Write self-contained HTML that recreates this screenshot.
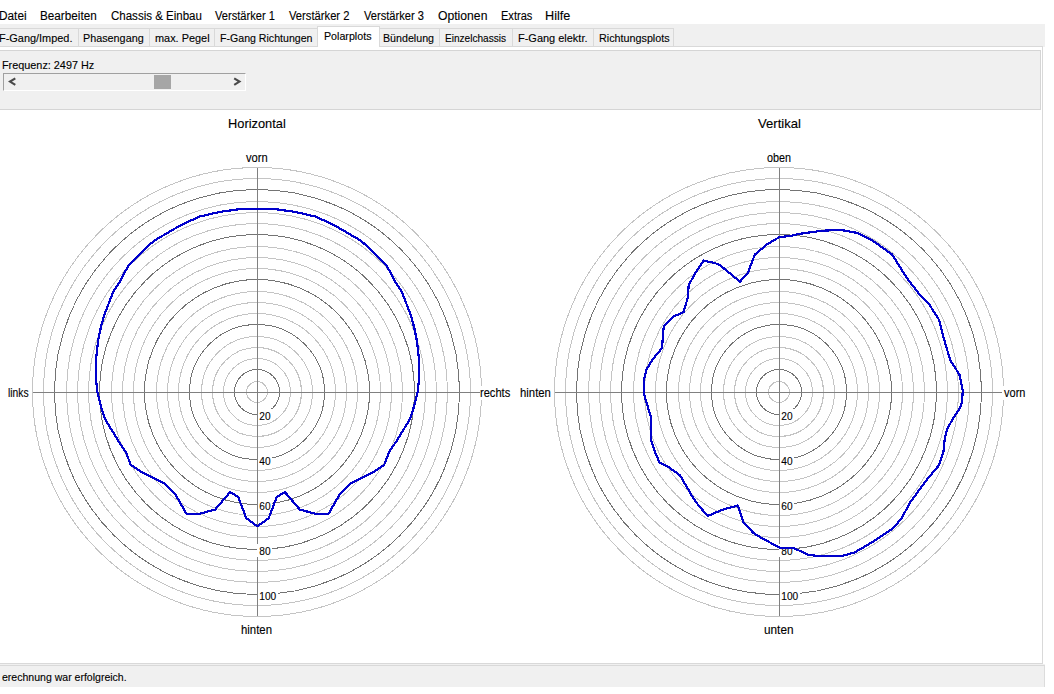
<!DOCTYPE html>
<html><head><meta charset="utf-8">
<style>
html,body{margin:0;padding:0;width:1054px;height:694px;overflow:hidden;background:#fff;}
body{position:relative;font-family:"Liberation Sans",sans-serif;}
.t{position:absolute;white-space:pre;transform-origin:0 0;color:#000;-webkit-text-stroke:0.12px #000;}
.abs{position:absolute;}
#win{position:absolute;left:0;top:24px;width:1045px;height:663px;background:#f0f0f0;}
.tab{position:absolute;top:28px;height:18px;border:1px solid #d9d9d9;border-bottom:none;background:#f0f0f0;box-sizing:content-box;}
.tabsel{position:absolute;left:317px;top:26px;width:61px;height:20px;border:1px solid #d9d9d9;border-bottom:none;background:#fff;}
#page{position:absolute;left:-1px;top:46px;width:1042px;height:616px;border:1px solid #d9d9d9;background:#fff;}
#panel{position:absolute;left:-1px;top:50px;width:1040px;height:58px;border:1px solid #d5d5d5;background:#f0f0f0;}
#sb{position:absolute;left:3px;top:73px;width:241px;height:16px;border-top:1px solid #a0a0a0;border-left:1px solid #a0a0a0;border-right:1px solid #fff;border-bottom:1px solid #fff;background:#f0f0f0;}
#thumb{position:absolute;left:154px;top:75px;width:17px;height:14px;background:#a6a6a6;}
#status{position:absolute;left:0;top:665px;width:1044px;height:21px;border-top:1px solid #d9d9d9;border-right:1px solid #dcdcdc;background:#f0f0f0;}
svg.plot{position:absolute;left:0;top:0;}
svg text{font-family:"Liberation Sans",sans-serif;fill:#000;stroke:#000;stroke-width:0.12px;}
</style></head><body>
<div id="win"></div>
<div class="tab" style="left:-7px;width:84px"></div><div class="tab" style="left:78px;width:70px"></div><div class="tab" style="left:149px;width:64px"></div><div class="tab" style="left:214px;width:103px"></div><div class="tab" style="left:379px;width:59px"></div><div class="tab" style="left:439px;width:72px"></div><div class="tab" style="left:512px;width:80px"></div><div class="tab" style="left:593px;width:79px"></div>
<div id="page"></div><div class="tabsel"></div><div class="abs" style="left:1043px;top:47px;width:11px;height:617px;background:#fff"></div>
<div id="panel"></div>
<div id="sb"></div>
<div id="thumb"></div>
<svg class="plot" width="1054" height="694" style="z-index:1">
<polyline points="15.3,78.3 10,81.6 15.3,84.9" fill="none" stroke="#4a4a4a" stroke-width="2.1"/>
<polyline points="234.2,78.3 239.5,81.6 234.2,84.9" fill="none" stroke="#4a4a4a" stroke-width="2.1"/>
</svg>
<div id="status"></div>
<svg class="plot" width="1054" height="694" viewBox="0 0 1054 694">
<circle cx="257" cy="392" r="10.50" fill="none" stroke="#c4c4c4" stroke-width="1" shape-rendering="crispEdges"/>
<circle cx="257" cy="392" r="22.50" fill="none" stroke="#747474" stroke-width="1" shape-rendering="crispEdges"/>
<circle cx="257" cy="392" r="33.50" fill="none" stroke="#c4c4c4" stroke-width="1" shape-rendering="crispEdges"/>
<circle cx="257" cy="392" r="44.50" fill="none" stroke="#c4c4c4" stroke-width="1" shape-rendering="crispEdges"/>
<circle cx="257" cy="392" r="55.50" fill="none" stroke="#c4c4c4" stroke-width="1" shape-rendering="crispEdges"/>
<circle cx="257" cy="392" r="67.50" fill="none" stroke="#747474" stroke-width="1" shape-rendering="crispEdges"/>
<circle cx="257" cy="392" r="78.50" fill="none" stroke="#c4c4c4" stroke-width="1" shape-rendering="crispEdges"/>
<circle cx="257" cy="392" r="89.50" fill="none" stroke="#c4c4c4" stroke-width="1" shape-rendering="crispEdges"/>
<circle cx="257" cy="392" r="100.50" fill="none" stroke="#c4c4c4" stroke-width="1" shape-rendering="crispEdges"/>
<circle cx="257" cy="392" r="112.50" fill="none" stroke="#747474" stroke-width="1" shape-rendering="crispEdges"/>
<circle cx="257" cy="392" r="123.50" fill="none" stroke="#c4c4c4" stroke-width="1" shape-rendering="crispEdges"/>
<circle cx="257" cy="392" r="134.50" fill="none" stroke="#c4c4c4" stroke-width="1" shape-rendering="crispEdges"/>
<circle cx="257" cy="392" r="145.50" fill="none" stroke="#c4c4c4" stroke-width="1" shape-rendering="crispEdges"/>
<circle cx="257" cy="392" r="157.50" fill="none" stroke="#747474" stroke-width="1" shape-rendering="crispEdges"/>
<circle cx="257" cy="392" r="168.50" fill="none" stroke="#c4c4c4" stroke-width="1" shape-rendering="crispEdges"/>
<circle cx="257" cy="392" r="179.50" fill="none" stroke="#c4c4c4" stroke-width="1" shape-rendering="crispEdges"/>
<circle cx="257" cy="392" r="190.50" fill="none" stroke="#c4c4c4" stroke-width="1" shape-rendering="crispEdges"/>
<circle cx="257" cy="392" r="202.50" fill="none" stroke="#747474" stroke-width="1" shape-rendering="crispEdges"/>
<circle cx="257" cy="392" r="213.50" fill="none" stroke="#c4c4c4" stroke-width="1" shape-rendering="crispEdges"/>
<circle cx="257" cy="392" r="224.50" fill="none" stroke="#c4c4c4" stroke-width="1" shape-rendering="crispEdges"/>
<line x1="33" y1="392.5" x2="481" y2="392.5" stroke="#808080" stroke-width="1"/>
<line x1="257.5" y1="168" x2="257.5" y2="616" stroke="#808080" stroke-width="1"/>
<circle cx="779" cy="392" r="10.50" fill="none" stroke="#c4c4c4" stroke-width="1" shape-rendering="crispEdges"/>
<circle cx="779" cy="392" r="22.50" fill="none" stroke="#747474" stroke-width="1" shape-rendering="crispEdges"/>
<circle cx="779" cy="392" r="33.50" fill="none" stroke="#c4c4c4" stroke-width="1" shape-rendering="crispEdges"/>
<circle cx="779" cy="392" r="44.50" fill="none" stroke="#c4c4c4" stroke-width="1" shape-rendering="crispEdges"/>
<circle cx="779" cy="392" r="55.50" fill="none" stroke="#c4c4c4" stroke-width="1" shape-rendering="crispEdges"/>
<circle cx="779" cy="392" r="67.50" fill="none" stroke="#747474" stroke-width="1" shape-rendering="crispEdges"/>
<circle cx="779" cy="392" r="78.50" fill="none" stroke="#c4c4c4" stroke-width="1" shape-rendering="crispEdges"/>
<circle cx="779" cy="392" r="89.50" fill="none" stroke="#c4c4c4" stroke-width="1" shape-rendering="crispEdges"/>
<circle cx="779" cy="392" r="100.50" fill="none" stroke="#c4c4c4" stroke-width="1" shape-rendering="crispEdges"/>
<circle cx="779" cy="392" r="112.50" fill="none" stroke="#747474" stroke-width="1" shape-rendering="crispEdges"/>
<circle cx="779" cy="392" r="123.50" fill="none" stroke="#c4c4c4" stroke-width="1" shape-rendering="crispEdges"/>
<circle cx="779" cy="392" r="134.50" fill="none" stroke="#c4c4c4" stroke-width="1" shape-rendering="crispEdges"/>
<circle cx="779" cy="392" r="145.50" fill="none" stroke="#c4c4c4" stroke-width="1" shape-rendering="crispEdges"/>
<circle cx="779" cy="392" r="157.50" fill="none" stroke="#747474" stroke-width="1" shape-rendering="crispEdges"/>
<circle cx="779" cy="392" r="168.50" fill="none" stroke="#c4c4c4" stroke-width="1" shape-rendering="crispEdges"/>
<circle cx="779" cy="392" r="179.50" fill="none" stroke="#c4c4c4" stroke-width="1" shape-rendering="crispEdges"/>
<circle cx="779" cy="392" r="190.50" fill="none" stroke="#c4c4c4" stroke-width="1" shape-rendering="crispEdges"/>
<circle cx="779" cy="392" r="202.50" fill="none" stroke="#747474" stroke-width="1" shape-rendering="crispEdges"/>
<circle cx="779" cy="392" r="213.50" fill="none" stroke="#c4c4c4" stroke-width="1" shape-rendering="crispEdges"/>
<circle cx="779" cy="392" r="224.50" fill="none" stroke="#c4c4c4" stroke-width="1" shape-rendering="crispEdges"/>
<line x1="555" y1="392.5" x2="1003" y2="392.5" stroke="#808080" stroke-width="1"/>
<line x1="779.5" y1="168" x2="779.5" y2="616" stroke="#808080" stroke-width="1"/>
<rect x="258" y="409" width="14" height="13" fill="#fff"/>
<text x="259.3" y="420" font-size="11" textLength="11.25" lengthAdjust="spacingAndGlyphs">20</text>
<rect x="258" y="454" width="14" height="13" fill="#fff"/>
<text x="259.3" y="465" font-size="11" textLength="11.25" lengthAdjust="spacingAndGlyphs">40</text>
<rect x="258" y="499" width="14" height="13" fill="#fff"/>
<text x="259.3" y="510" font-size="11" textLength="11.25" lengthAdjust="spacingAndGlyphs">60</text>
<rect x="257" y="544" width="15" height="13" fill="#fff"/>
<text x="259.3" y="555" font-size="11" textLength="11.25" lengthAdjust="spacingAndGlyphs">80</text>
<rect x="258" y="589" width="20" height="13" fill="#fff"/>
<text x="259.3" y="600" font-size="11" textLength="16.9" lengthAdjust="spacingAndGlyphs">100</text>
<rect x="480" y="386" width="36" height="14" fill="#fff"/>
<rect x="780" y="409" width="14" height="13" fill="#fff"/>
<text x="781.3" y="420" font-size="11" textLength="11.25" lengthAdjust="spacingAndGlyphs">20</text>
<rect x="780" y="454" width="14" height="13" fill="#fff"/>
<text x="781.3" y="465" font-size="11" textLength="11.25" lengthAdjust="spacingAndGlyphs">40</text>
<rect x="780" y="499" width="14" height="13" fill="#fff"/>
<text x="781.3" y="510" font-size="11" textLength="11.25" lengthAdjust="spacingAndGlyphs">60</text>
<rect x="779" y="544" width="15" height="13" fill="#fff"/>
<text x="781.3" y="555" font-size="11" textLength="11.25" lengthAdjust="spacingAndGlyphs">80</text>
<rect x="780" y="589" width="20" height="13" fill="#fff"/>
<text x="781.3" y="600" font-size="11" textLength="16.9" lengthAdjust="spacingAndGlyphs">100</text>
<rect x="1002" y="386" width="36" height="14" fill="#fff"/>
<polyline fill="none" stroke="#0000cc" stroke-width="2.2" stroke-linejoin="round" shape-rendering="crispEdges" points="257.3,209.0 241.0,209.0 219.7,211.9 199.4,216.6 180.7,225.2 154.8,240.3 146.1,247.6 128.8,264.8 118.7,283.6 113.2,291.9 104.0,315.6 100.7,328.0 98.1,340.9 96.2,357.8 95.8,378.5 97.5,392.7 101.5,408.1 105.0,419.0 117.6,439.7 125.7,451.8 130.9,465.1 140.7,471.4 150.0,476.1 165.0,483.6 174.8,493.4 186.3,513.6 200.2,513.6 215.1,509.6 230.1,492.1 238.2,496.9 246.3,518.2 257.3,526.3 268.7,518.2 276.8,496.9 284.9,492.1 299.9,509.6 314.8,513.6 328.7,513.6 340.2,493.4 350.0,483.6 365.0,476.1 374.3,471.4 384.1,465.1 389.3,451.8 397.4,439.7 410.0,419.0 413.5,408.1 417.5,392.7 419.2,378.5 418.8,357.8 416.9,340.9 414.3,328.0 411.0,315.6 401.8,291.9 396.3,283.6 386.2,264.8 368.9,247.6 360.2,240.3 334.3,225.2 315.6,216.6 295.3,211.9 274.0,209.0 257.7,209.0 257.3,209.0"/>
<polyline fill="none" stroke="#0000cc" stroke-width="2.2" stroke-linejoin="round" shape-rendering="crispEdges" points="779.4,237.1 789.5,236.1 799.9,233.8 821.6,230.8 840.3,229.8 857.6,233.0 872.0,240.2 892.2,254.6 906.6,277.6 918.1,292.7 929.6,305.0 939.2,320.1 944.3,340.2 950.3,360.4 959.4,374.5 962.8,390.6 962.0,402.7 959.4,408.7 952.3,419.8 947.3,428.9 944.7,439.0 943.4,452.1 939.1,465.1 926.1,480.6 909.7,503.1 901.9,517.8 893.2,528.2 872.5,542.0 854.7,552.4 842.8,555.8 816.0,555.8 808.1,554.7 794.4,548.4 780.2,547.8 764.8,539.8 753.4,533.0 743.5,522.1 738.0,505.5 724.5,509.0 707.9,515.8 699.1,506.3 692.0,496.0 680.1,475.4 669.0,467.4 659.5,462.4 654.2,450.0 650.7,438.4 650.7,415.9 646.1,401.5 643.8,392.3 643.8,380.2 646.4,369.8 652.5,359.5 662.0,348.2 663.7,326.7 674.1,316.3 683.6,312.0 687.9,297.3 688.7,285.2 695.6,272.5 703.6,260.6 715.2,263.2 719.8,265.0 739.9,281.7 748.0,272.5 752.6,260.3 754.9,254.6 763.0,247.7 767.6,244.0 779.4,237.1"/>
</svg>
<div class="t" style="left:-0.98px;top:10px;font-size:12px;line-height:12px;transform:scaleX(0.9846);">Datei</div>
<div class="t" style="left:39.62px;top:10px;font-size:12px;line-height:12px;transform:scaleX(0.9768);">Bearbeiten</div>
<div class="t" style="left:110.50px;top:10px;font-size:12px;line-height:12px;transform:scaleX(0.9596);">Chassis &amp; Einbau</div>
<div class="t" style="left:215.20px;top:10px;font-size:12px;line-height:12px;transform:scaleX(0.9250);">Verstärker 1</div>
<div class="t" style="left:289.20px;top:10px;font-size:12px;line-height:12px;transform:scaleX(0.9344);">Verstärker 2</div>
<div class="t" style="left:363.60px;top:10px;font-size:12px;line-height:12px;transform:scaleX(0.9250);">Verstärker 3</div>
<div class="t" style="left:437.60px;top:10px;font-size:12px;line-height:12px;transform:scaleX(1.0146);">Optionen</div>
<div class="t" style="left:500.58px;top:10px;font-size:12px;line-height:12px;transform:scaleX(0.9212);">Extras</div>
<div class="t" style="left:545.44px;top:10px;font-size:12px;line-height:12px;transform:scaleX(1.0565);">Hilfe</div>
<div class="t" style="left:-1.29px;top:33px;font-size:11px;line-height:11px;transform:scaleX(0.9931);">F-Gang/Imped.</div>
<div class="t" style="left:83.42px;top:33px;font-size:11px;line-height:11px;transform:scaleX(0.9817);">Phasengang</div>
<div class="t" style="left:154.61px;top:33px;font-size:11px;line-height:11px;transform:scaleX(0.9925);">max. Pegel</div>
<div class="t" style="left:219.64px;top:33px;font-size:11px;line-height:11px;transform:scaleX(0.9632);">F-Gang Richtungen</div>
<div class="t" style="left:323.83px;top:31px;font-size:11px;line-height:11px;transform:scaleX(0.9708);">Polarplots</div>
<div class="t" style="left:382.73px;top:33px;font-size:11px;line-height:11px;transform:scaleX(0.9706);">Bündelung</div>
<div class="t" style="left:444.68px;top:33px;font-size:11px;line-height:11px;transform:scaleX(0.9167);">Einzelchassis</div>
<div class="t" style="left:517.50px;top:33px;font-size:11px;line-height:11px;transform:scaleX(0.9971);">F-Gang elektr.</div>
<div class="t" style="left:598.72px;top:33px;font-size:11px;line-height:11px;transform:scaleX(0.9789);">Richtungsplots</div>
<div class="t" style="left:2.31px;top:60px;font-size:11px;line-height:11px;transform:scaleX(0.9859);">Frequenz: 2497 Hz</div>
<div class="t" style="left:1.80px;top:672px;font-size:11px;line-height:11px;transform:scaleX(0.9569);">erechnung war erfolgreich.</div>
<div class="t" style="left:228.46px;top:118px;font-size:12.4px;line-height:12.4px;transform:scaleX(1.0352);">Horizontal</div>
<div class="t" style="left:758.20px;top:118px;font-size:12.4px;line-height:12.4px;transform:scaleX(1.0575);">Vertikal</div>
<div class="t" style="left:245.90px;top:152px;font-size:12px;line-height:12px;transform:scaleX(0.9304);">vorn</div>
<div class="t" style="left:240.75px;top:624px;font-size:12px;line-height:12px;transform:scaleX(0.9484);">hinten</div>
<div class="t" style="left:7.64px;top:387px;font-size:12px;line-height:12px;transform:scaleX(0.8565);">links</div>
<div class="t" style="left:480.47px;top:387px;font-size:12px;line-height:12px;transform:scaleX(0.9250);">rechts</div>
<div class="t" style="left:766.80px;top:152px;font-size:12px;line-height:12px;transform:scaleX(0.9000);">oben</div>
<div class="t" style="left:763.72px;top:624px;font-size:12px;line-height:12px;transform:scaleX(0.9821);">unten</div>
<div class="t" style="left:519.75px;top:387px;font-size:12px;line-height:12px;transform:scaleX(0.9452);">hinten</div>
<div class="t" style="left:1004.10px;top:387px;font-size:12px;line-height:12px;transform:scaleX(0.9174);">vorn</div>

</body></html>
